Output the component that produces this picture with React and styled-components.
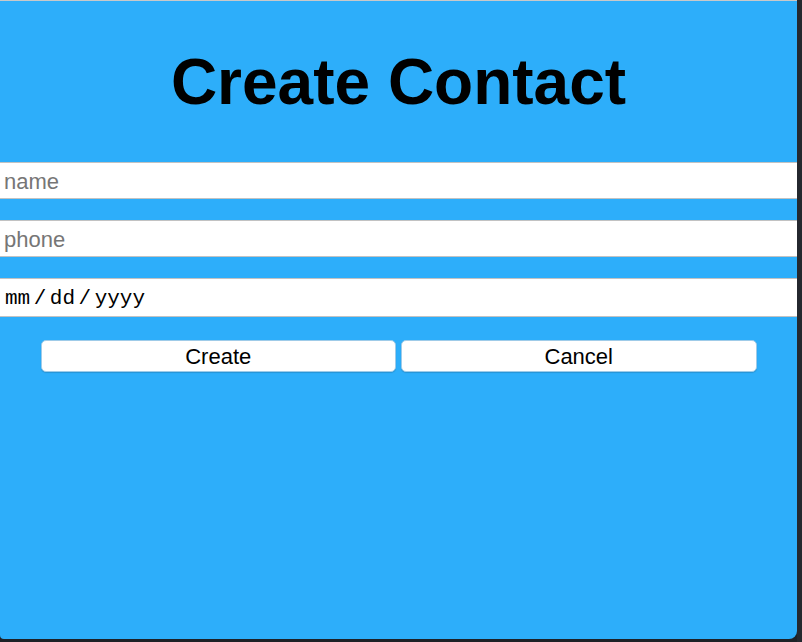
import React from 'react';
import styled, { createGlobalStyle } from 'styled-components';

const GlobalStyle = createGlobalStyle`
  html, body {
    margin: 0;
    padding: 0;
    background-color: #1d2126;
  }
`;

const Window = styled.div`
  display: flex;
  min-height: 642px;
`;

const Panel = styled.div`
  width: 797px;
  height: 638px;
  background-color: #2daefa;
  border-top: 1px solid #c9c9c9;
  border-radius: 0 0 8px 4px;
  font-family: 'Liberation Sans', Arial, sans-serif;
`;

const SideStrip = styled.div`
  flex: 1;
  background-color: #24282e;
`;

const Title = styled.h1`
  margin: 0;
  padding-top: 44px;
  font-size: 64px;
  line-height: 74px;
  font-weight: bold;
  text-align: center;
  color: #000;
`;

const Form = styled.form`
  display: flex;
  flex-direction: column;
  gap: 21px;
  margin-top: 43px;
`;

const Field = styled.input`
  display: block;
  box-sizing: border-box;
  width: 100%;
  height: ${props => props.tall ? '39px' : '37px'};
  margin: 0;
  padding: 2px 4px 0;
  border: none;
  border-top: 1px solid #c2c2c2;
  border-bottom: 1px solid #c2c2c2;
  border-radius: 0;
  background: #fff;
  outline: none;
  font-family: ${props => props.mono ? "'Liberation Mono', 'Courier New', monospace" : "'Liberation Sans', Arial, sans-serif"};
  font-size: ${props => props.mono ? '21px' : '22px'};
  color: #000;

  &::placeholder {
    color: #767676;
  }

  &::-webkit-datetime-edit-text {
    padding: 0 2.5px;
  }

  &::-webkit-calendar-picker-indicator {
    display: none;
  }
`;

const Buttons = styled.div`
  display: flex;
  gap: 5px;
  width: 716px;
  margin: 2px auto 0;
`;

const Button = styled.button`
  flex: 1;
  height: 32px;
  padding: 2px 0 0;
  border: 1px solid #9fcbe8;
  border-radius: 5px;
  background: #fff;
  box-shadow: 0 1px 1px rgba(0, 0, 0, 0.15);
  font-family: 'Liberation Sans', Arial, sans-serif;
  font-size: 22px;
  color: #000;
  cursor: pointer;
`;

const App = () => {
  return (
    <>
      <GlobalStyle />
      <Window>
        <Panel>
          <Title>Create Contact</Title>
          <Form onSubmit={e => e.preventDefault()}>
            <Field type="text" name="name" placeholder="name" />
            <Field type="tel" name="phone" placeholder="phone" />
            <Field type="date" name="birthday" mono tall />
            <Buttons>
              <Button type="submit">Create</Button>
              <Button type="button">Cancel</Button>
            </Buttons>
          </Form>
        </Panel>
        <SideStrip />
      </Window>
    </>
  );
};

export default App;
